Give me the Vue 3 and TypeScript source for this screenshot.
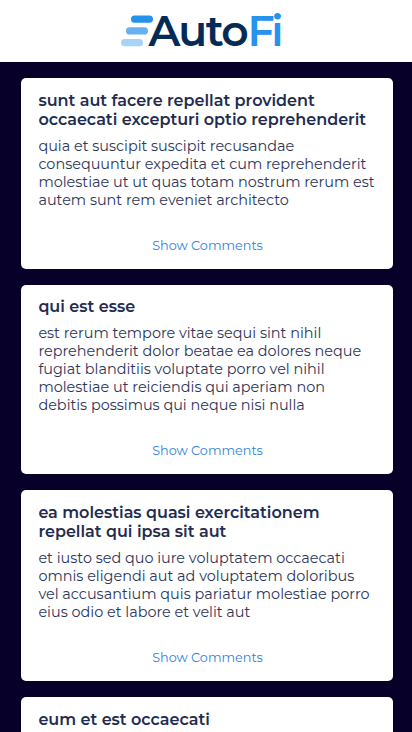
<script setup lang="ts">
interface Post {
  id: number
  title: string
  body: string
}

const posts: Post[] = [
  {
    id: 1,
    title: 'sunt aut facere repellat provident occaecati excepturi optio reprehenderit',
    body: 'quia et suscipit suscipit recusandae consequuntur expedita et cum reprehenderit molestiae ut ut quas totam nostrum rerum est autem sunt rem eveniet architecto',
  },
  {
    id: 2,
    title: 'qui est esse',
    body: 'est rerum tempore vitae sequi sint nihil reprehenderit dolor beatae ea dolores neque fugiat blanditiis voluptate porro vel nihil molestiae ut reiciendis qui aperiam non debitis possimus qui neque nisi nulla',
  },
  {
    id: 3,
    title: 'ea molestias quasi exercitationem repellat qui ipsa sit aut',
    body: 'et iusto sed quo iure voluptatem occaecati omnis eligendi aut ad voluptatem doloribus vel accusantium quis pariatur molestiae porro eius odio et labore et velit aut',
  },
  { id: 4, title: 'eum et est occaecati', body: '' },
]
</script>

<template>
  <div class="page">
    <header class="header">
      <svg class="logo" viewBox="0 0 164 40" role="img" aria-label="AutoFi">
        <rect x="11" y="4.5" width="22" height="7.3" rx="3.6" fill="#2491eb" />
        <rect x="6" y="16.2" width="22" height="7.3" rx="3.6" fill="#66b2f1" />
        <rect x="1" y="28" width="22" height="7.3" rx="3.6" fill="#a7d3f7" />
        <text class="auto" y="35" x="28.5 58.2 85.7 101.3">Auto</text>
        <text class="fi" y="35" x="127.6 151.2">Fi</text>
      </svg>
    </header>
    <main class="feed">
      <article v-for="post in posts" :key="post.id" class="card">
        <h2 class="title">{{ post.title }}</h2>
        <p class="body">{{ post.body }}</p>
        <button v-if="post.body" class="comments" type="button">Show Comments</button>
      </article>
    </main>
  </div>
</template>

<style>
body { background: #070028; }
</style>

<style scoped>
.page { height: 732px; overflow: hidden; background: #070028; font-family: Montserrat, sans-serif; }
.header { display: flex; justify-content: center; height: 62px; padding-top: 11px; box-sizing: border-box; background: #fff; }
.logo { width: 164px; height: 40px; margin-right: 8px; overflow: visible; }
.logo text { font-size: 42.5px; font-weight: 600; }
.auto { fill: #032b56; }
.fi { fill: #2693ef; }
.feed { display: flex; flex-direction: column; gap: 16px; padding: 16px 19px 0 21px; }
.card { display: flex; flex-direction: column; padding: 12.8px 16.4px 13.8px 17.4px; border-radius: 5px; background: #fff; }
.title { margin: 0 0 8px; color: #222c50; font-size: 16px; font-weight: 600; line-height: 19px; }
.body { margin: 0; color: #2d3659; font-size: 14.42px; font-weight: 400; line-height: 18px; }
.comments { align-self: center; height: 18px; margin-top: 28px; padding: 0; border: 0; background: none; color: #3182d8; font-family: inherit; font-size: 12.8px; font-weight: 400; line-height: 18px; }
</style>
